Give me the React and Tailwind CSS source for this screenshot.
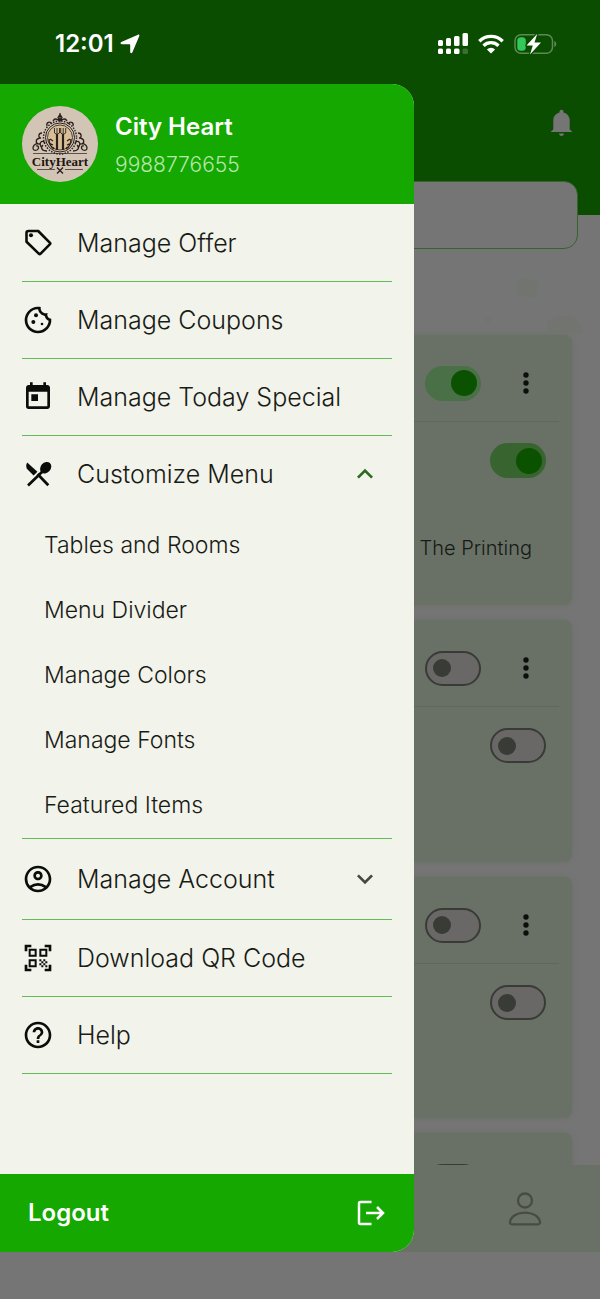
import React, { useState } from 'react';
import {
  MdHelpOutline,
  MdKeyboardArrowDown,
  MdKeyboardArrowUp,
  MdOutlineAccountCircle,
  MdOutlineCookie,
  MdQrCodeScanner,
  MdToday,
} from 'react-icons/md';

const customizeItems = ['Tables and Rooms', 'Menu Divider', 'Manage Colors', 'Manage Fonts', 'Featured Items'];

const cards = [
  { id: 1, on: true, note: 'The Printing', height: 'h-[270px]' },
  { id: 2, on: false, height: 'h-[242px]' },
  { id: 3, on: false, height: 'h-[241px]' },
  { id: 4, on: false, height: 'h-[241px]' },
];

function TagIcon() {
  return (
    <svg width="32" height="32" viewBox="0 0 32 32" fill="none" stroke="currentColor" strokeWidth="2.600" strokeLinejoin="round">
      <path d="M6.500 4h9.700L28 15.800q.7.700 0 1.400l-9.600 9.600q-.7.700-1.400 0L4.500 14.700V6q0-2 2-2z" />
      <circle cx="9" cy="8.300" r="2" fill="currentColor" stroke="none" />
    </svg>
  );
}

function CutleryIcon() {
  return (
    <svg width="32" height="32" viewBox="0 0 32 32" fill="none" stroke="currentColor" strokeWidth="2.700">
      <path d="M5.200 4.500c-1.700 2.600-1.200 5.300.6 7.200l5.800 5.800 3.800-3.800z" fill="currentColor" stroke="none" />
      <path d="M15.500 16l10.800 11.300M21 13L6 27.500" />
      <ellipse cx="23.700" cy="9.700" rx="5" ry="6.300" transform="rotate(42 23.700 9.700)" fill="currentColor" stroke="none" />
    </svg>
  );
}

function BellIcon() {
  return (
    <svg width="32" height="32" viewBox="0 0 32 32" fill="currentColor">
      <path d="M16.500 2.800c1.200 0 2 .9 2 2v.7c3.700 1 6.200 3.900 6.200 7.900v8.300c0 .5.2.9.500 1.200l2.300 2.100H5.500l2.300-2.100c.3-.3.500-.7.500-1.200v-8.300c0-4 2.500-6.900 6.200-7.900v-.7c0-1.100.8-2 2-2z" />
      <path d="M14 26.500h5c-.2 1.500-1 2.500-2.500 2.500S14.200 28 14 26.500z" />
    </svg>
  );
}

function StatusBar() {
  return (
    <div className="flex h-[84px] shrink-0 items-center justify-between pt-1 pr-[43px] pl-[55px] text-white">
      <div className="flex items-center gap-1.5">
        <span className="text-2xl leading-7 font-semibold">12:01</span>
        <svg width="20" height="20" viewBox="0 0 20 20" fill="currentColor">
          <path d="M18 .7c.9-.4 1.700.4 1.300 1.300L12.300 18.400c-.5 1.200-2.100.9-2.100-.4v-7c0-.6-.2-.8-.8-.8H1.700C.3 10.200.1 8.600 1.300 8.100z" />
        </svg>
      </div>
      <div className="flex items-center gap-[10px]">
        <svg width="30" height="22" viewBox="0 0 30 22" fill="currentColor">
          <rect x="0" y="7" width="5" height="6" rx="1.500" />
          <rect x="8" y="5" width="5" height="8" rx="1.500" />
          <rect x="16" y="3" width="5.500" height="10" rx="1.500" />
          <rect x="24.500" y="0" width="5.500" height="13" rx="1.500" />
          <rect x="0" y="15.500" width="5" height="5.500" rx="1.500" />
          <rect x="8" y="15.500" width="5" height="5.500" rx="1.500" />
          <rect x="16" y="15.500" width="5.500" height="5.500" rx="1.500" />
          <rect x="24.500" y="15.500" width="5.500" height="5.500" rx="1.500" opacity="0.2" />
        </svg>
        <svg width="26" height="20" viewBox="0 0 26 20" fill="none" stroke="currentColor" strokeWidth="3.300">
          <path d="M1.300 7.200a16.800 16.800 0 0 1 23.400 0" />
          <path d="M5.500 11.700a10.800 10.800 0 0 1 15 0" />
          <path d="M13 19.500l-4.100-4.100a5.900 5.900 0 0 1 8.200 0z" fill="currentColor" stroke="none" />
        </svg>
        <svg width="43" height="22" viewBox="0 0 43 22" fill="none">
          <rect x="1" y="1.700" width="37.500" height="18.600" rx="6" stroke="#5c8a54" strokeWidth="1.500" />
          <path d="M40.300 8v6c1.300-.6 2-1.700 2-3s-.7-2.400-2-3z" fill="#5c8a54" />
          <rect x="3.300" y="4.300" width="8.500" height="13.400" rx="3.500" fill="#34c759" />
          <path
            d="M23.300.8L12.500 12.500h6.300L16 21.600 27 9.400h-6.500z"
            fill="white"
            stroke="#0a4d00"
            strokeWidth="2.500"
            strokeLinejoin="round"
            paintOrder="stroke"
          />
        </svg>
      </div>
    </div>
  );
}

function Toggle({ label, on, soft }) {
  const base = "flex h-[35px] w-14 shrink-0 appearance-none items-center rounded-full before:block before:rounded-full before:content-['']";
  const onTrack = soft ? 'checked:bg-[#4a7047]' : 'checked:bg-[#38652f]';
  return (
    <input
      type="checkbox"
      aria-label={label}
      defaultChecked={on}
      className={`${base} border-2 border-[#383b36] bg-[#696866] pl-[6px] before:size-[18px] before:bg-[#383b36] checked:justify-end checked:border-0 checked:pr-1 checked:before:size-[26px] checked:before:bg-[#0a5200] ${onTrack}`}
    />
  );
}

function ItemCard({ card }) {
  return (
    <section className={`shrink-0 rounded-lg bg-[#697167] shadow-[0_0_5px_#697167] ${card.height}`}>
      <div className="flex h-[86px] items-center justify-end gap-[25px] pt-[10px] pr-[26px]">
        <Toggle label={`Category ${card.id}`} on={card.on} soft />
        <button type="button" aria-label="More options" className="flex h-10 w-10 items-center justify-center text-[#0c0f0c]">
          <svg width="6" height="24" viewBox="0 0 6 24" fill="currentColor">
            <circle cx="3" cy="4" r="2.700" />
            <circle cx="3" cy="12" r="2.700" />
            <circle cx="3" cy="20" r="2.700" />
          </svg>
        </button>
      </div>
      <hr className="mx-[13px] border-[#5f685d]" />
      <div className="flex h-[77px] items-center justify-end pr-[26px]">
        <Toggle label={`Item ${card.id}`} on={card.on} />
      </div>
      {card.note && <p className="mt-[35px] pr-10 text-right text-xl leading-7 font-light text-[#151a14]">{card.note}</p>}
    </section>
  );
}

function Logo() {
  return (
    <svg className="size-[76px] shrink-0" viewBox="0 0 76 76" fill="none" stroke="#2b211b">
      <circle cx="38" cy="38" r="38" fill="#d2c5b6" stroke="none" />
      <circle cx="38" cy="31.500" r="16.500" strokeWidth="1.500" strokeDasharray="1.500 1.300" />
      <circle cx="38" cy="31.500" r="14.500" strokeWidth="1" />
      <circle cx="38" cy="31.500" r="12.500" fill="#d9bf98" strokeWidth="0.800" />
      <path d="M38 7v8M36 11.500l2-3 2 3-2 3zM31 15c2-4 5-1 7 0 2-1 5-4 7 0M25 20c-1-4 3-5 5-2M51 20c1-4-3-5-5-2" strokeWidth="1.300" />
      <path
        d="M20 27c-4 0-4 5-1 5M18 32c-5 1-5 6 0 6M16 37c-7 2-6 9-1 7 3-2 1-5-1-4M20 42c-4-5 0-9 3-5M25 45c-5 0-7-3-4-6M56 27c4 0 4 5 1 5M58 32c5 1 5 6 0 6M60 37c7 2 6 9 1 7-3-2-1-5 1-4M56 42c4-5 0-9-3-5M51 45c5 0 7-3 4-6"
        strokeWidth="1.300"
      />
      <path d="M35 28v16M41 28v16" strokeWidth="2.200" />
      <path d="M32.500 22v5q2.500 3 5 0v-5M35 22v6M38.700 22v5q2.500 3 5 0v-5M41.200 22v6" strokeWidth="0.900" />
      <path d="M32 43c-3-2-5-6-5-10M44 43c3-2 5-6 5-10M27 37l4 2M28 33l3 2M49 37l-4 2M48 33l-3 2M29 41l3 1M47 41l-3 1" strokeWidth="1.300" />
      <path d="M11 47.500h54M15 63.500h18M43 63.500h18" strokeWidth="0.700" />
      <path d="M35 61.500l6 6M41 61.500l-6 6" strokeWidth="1.400" />
      <text x="38" y="59.500" textAnchor="middle" fontFamily="Liberation Serif, serif" fontWeight="700" fontSize="13" fill="#1d1511" stroke="none">
        CityHeart
      </text>
    </svg>
  );
}

function DrawerItem({ icon, label, tall, children, onClick, expanded }) {
  return (
    <button
      type="button"
      onClick={onClick}
      aria-expanded={expanded}
      className={`flex w-full items-center gap-[23px] pr-[11px] text-left ${tall ? 'h-20' : 'h-[76px]'}`}
    >
      <span className="text-[32px] text-[#0b0d0a]">{icon}</span>
      <span className="flex-1 pt-0.5 text-[25px] font-light whitespace-nowrap">{label}</span>
      {children}
    </button>
  );
}

function Drawer() {
  const [customizeOpen, setCustomizeOpen] = useState(true);
  const [accountOpen, setAccountOpen] = useState(false);

  return (
    <aside className="absolute top-[84px] bottom-[47px] left-0 flex w-[69%] flex-col overflow-hidden rounded-r-[22px] bg-[#f2f3ea] text-[#181b16]">
      <header className="flex h-[120px] shrink-0 items-center gap-[17px] bg-[#14a800] px-[22px] text-white">
        <Logo />
        <div className="pt-0.5">
          <h1 className="text-2xl leading-10 font-semibold">City Heart</h1>
          <p className="text-[21px] leading-9 font-light text-[#b5e6ac]">9988776655</p>
        </div>
      </header>

      <nav className="flex-1 overflow-y-auto px-[22px] pt-px">
        <ul className="divide-y divide-[#62bb55] border-b border-[#62bb55]">
          <li><DrawerItem icon={<TagIcon />} label="Manage Offer" /></li>
          <li><DrawerItem icon={<MdOutlineCookie />} label="Manage Coupons" /></li>
          <li><DrawerItem icon={<MdToday />} label="Manage Today Special" /></li>
          <li>
            <DrawerItem
              icon={<CutleryIcon />}
              label="Customize Menu"
              expanded={customizeOpen}
              onClick={() => setCustomizeOpen(!customizeOpen)}
            >
              {customizeOpen ? (
                <MdKeyboardArrowUp className="text-[32px] text-[#2c6a22]" />
              ) : (
                <MdKeyboardArrowDown className="text-[32px] text-[#454843]" />
              )}
            </DrawerItem>
            {customizeOpen && (
              <ul className="pt-px">
                {customizeItems.map((item) => (
                  <li key={item}>
                    <button type="button" className="block h-[65px] w-full pl-[22px] text-left text-[23px] font-light">
                      {item}
                    </button>
                  </li>
                ))}
              </ul>
            )}
          </li>
          <li>
            <DrawerItem
              icon={<MdOutlineAccountCircle />}
              label="Manage Account"
              tall
              expanded={accountOpen}
              onClick={() => setAccountOpen(!accountOpen)}
            >
              {accountOpen ? (
                <MdKeyboardArrowUp className="text-[32px] text-[#2c6a22]" />
              ) : (
                <MdKeyboardArrowDown className="text-[32px] text-[#454843]" />
              )}
            </DrawerItem>
          </li>
          <li><DrawerItem icon={<MdQrCodeScanner />} label="Download QR Code" /></li>
          <li><DrawerItem icon={<MdHelpOutline />} label="Help" /></li>
        </ul>
      </nav>

      <button type="button" className="flex h-[78px] shrink-0 items-center justify-between bg-[#14a800] pr-[29px] pl-7 text-white">
        <span className="text-2xl font-semibold">Logout</span>
        <svg width="28" height="26" viewBox="0 0 28 26" fill="none" stroke="currentColor" strokeWidth="2.500">
          <path d="M14.500 2H3.500Q2 2 2 3.500v19Q2 24 3.500 24h11" />
          <path d="M9 13h17M20 7l6 6-6 6" />
        </svg>
      </button>
    </aside>
  );
}

export default function App() {
  return (
    <div className="relative flex h-screen flex-col overflow-hidden bg-[#757575] font-['Inter',sans-serif]">
      <header className="shrink-0 bg-[#0a4d00]">
        <StatusBar />
        <div className="flex h-[97px] items-start justify-end pt-[23px] pr-[23px]">
          <button type="button" aria-label="Notifications" className="text-[#757575]">
            <BellIcon />
          </button>
        </div>
        <div className="-mb-[34px] px-[22px]">
          <input
            type="search"
            aria-label="Search"
            className="block h-[68px] w-full rounded-[14px] border border-[#37632f] bg-[#757575] px-4"
          />
        </div>
      </header>

      <main className="relative flex min-h-0 flex-1 flex-col gap-[15px] overflow-hidden px-7 pt-[120px]">
        {/* faint confetti behind the first card */}
        <svg className="absolute top-[58px] right-4 text-[#72756f]" width="100" height="66" viewBox="0 0 100 66" fill="currentColor">
          <path d="M34 8l6-4 5 3 6-1 4 6-3 5 1 6-8 2-4-3-7 2-1-8z" />
          <circle cx="4" cy="46" r="3" />
          <path d="M62 58l2-10 8-5 9 1 7-1 8 6 3 9-3 3H65z" />
        </svg>
        {cards.map((card) => (
          <ItemCard key={card.id} card={card} />
        ))}
      </main>

      <footer className="relative flex h-[87px] shrink-0 items-center justify-end bg-[#697167] pr-[58px]">
        <button type="button" aria-label="Profile" className="text-[#464c44]">
          <svg width="34" height="34" viewBox="0 0 34 34" fill="none" stroke="currentColor" strokeWidth="2.300">
            <circle cx="17" cy="8.500" r="7" />
            <path d="M4 32.300h26c1.500 0 2.300-1 2-2.400C30.800 24 24.500 20.700 17 20.700S3.200 24 2 29.900c-.3 1.400.5 2.400 2 2.400z" />
          </svg>
        </button>
      </footer>
      <div className="h-[47px] shrink-0" />

      <Drawer />
    </div>
  );
}
